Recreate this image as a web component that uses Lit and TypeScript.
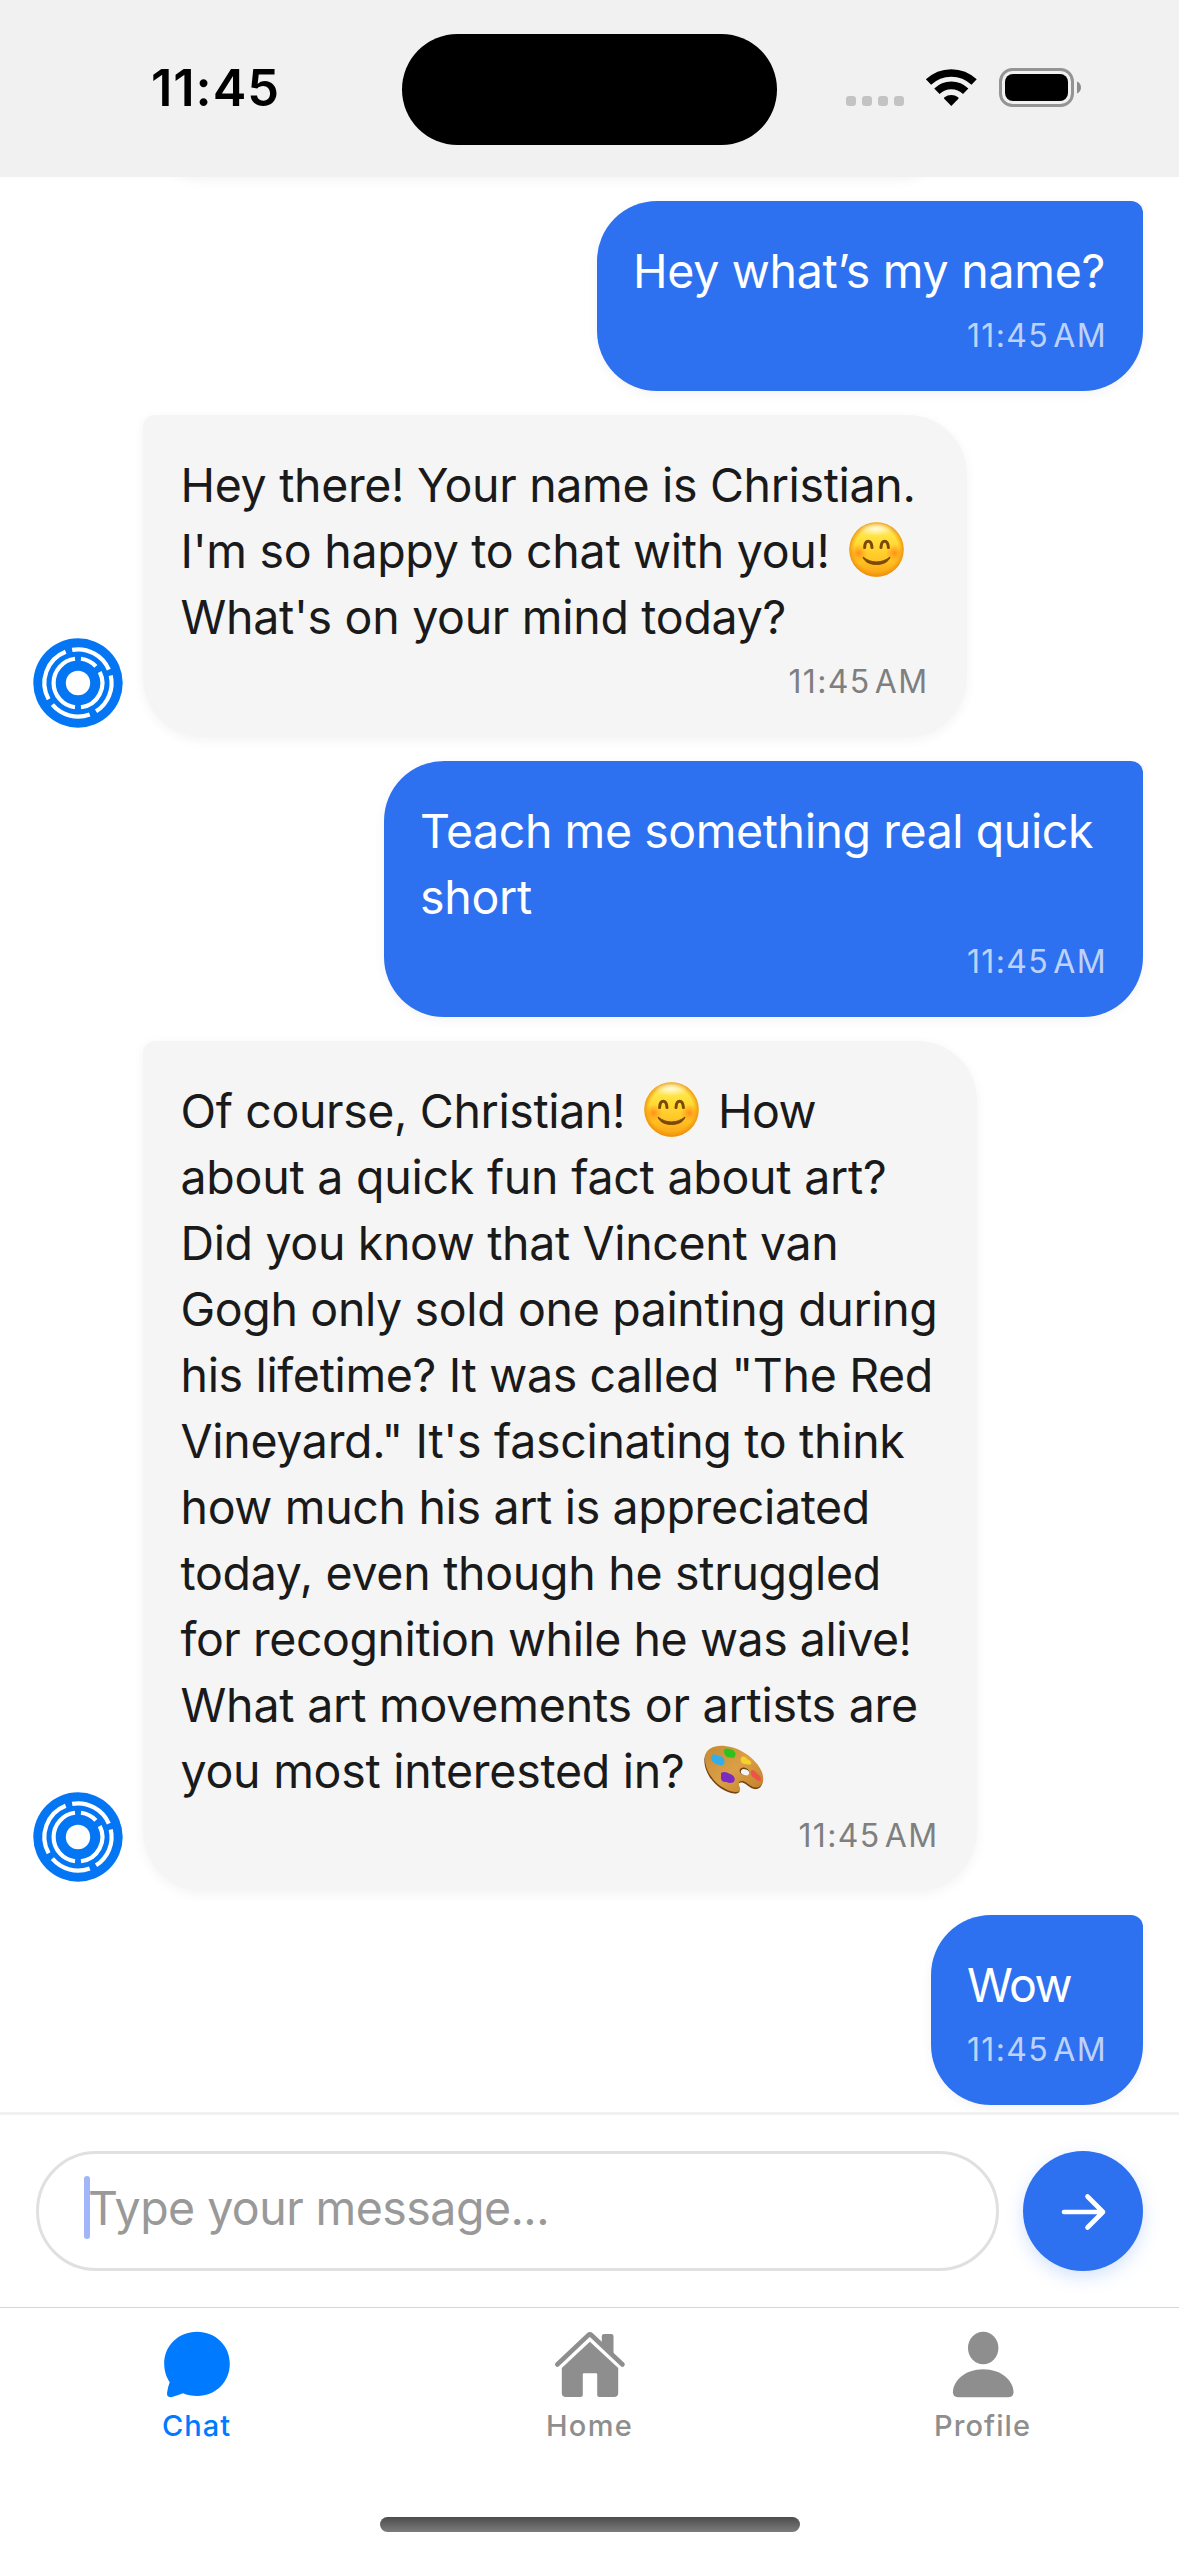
import { LitElement, html, svg, css, nothing, TemplateResult } from "lit";
import { customElement, property } from "lit/decorators.js";

type Part = { text: string; width: number } | { emoji: "smile" | "palette" };
interface Message {
  from: "me" | "bot";
  width: number;
  lines: Part[][];
  time: string;
}

const t = (text: string, width: number): Part => ({ text, width });

const MESSAGES: Message[] = [
  {
    from: "me",
    width: 546,
    time: "11:45\u200aAM",
    lines: [[t("Hey what’s my name?", 472)]],
  },
  {
    from: "bot",
    width: 824,
    time: "11:45\u200aAM",
    lines: [
      [t("Hey there! Your name is Christian.", 735)],
      [t("I'm so happy to chat with you!", 649), { emoji: "smile" }],
      [t("What's on your mind today?", 605.5)],
    ],
  },
  {
    from: "me",
    width: 759,
    time: "11:45\u200aAM",
    lines: [[t("Teach me something real quick", 673)], [t("short", 112)]],
  },
  {
    from: "bot",
    width: 834,
    time: "11:45\u200aAM",
    lines: [
      [t("Of course, Christian!", 444.5), { emoji: "smile" }, t("How", 98)],
      [t("about a quick fun fact about art?", 706)],
      [t("Did you know that Vincent van", 658)],
      [t("Gogh only sold one painting during", 757)],
      [t('his lifetime? It was called "The Red', 752.5)],
      [t('Vineyard." It\'s fascinating to think', 724)],
      [t("how much his art is appreciated", 689.5)],
      [t("today, even though he struggled", 700.5)],
      [t("for recognition while he was alive!", 731)],
      [t("What art movements or artists are", 737.5)],
      [t("you most interested in?", 504), { emoji: "palette" }],
    ],
  },
  { from: "me", width: 212, time: "11:45\u200aAM", lines: [[t("Wow", 104)]] },
];

/** One line of text whose tracking is adjusted so that it spans `width` pixels. */
@customElement("tracked-text")
class TrackedText extends LitElement {
  static styles = css`
    :host {
      display: inline-block;
      white-space: pre;
    }
  `;
  @property() text = "";
  @property({ type: Number }) width = 0;

  render() {
    return html`<span>${this.text}</span>`;
  }

  updated() {
    const span = this.renderRoot.querySelector("span")!;
    span.style.letterSpacing = "0";
    const natural = span.getBoundingClientRect().width;
    span.style.letterSpacing = `${(this.width - natural) / this.text.length}px`;
  }
}

@customElement("emoji-icon")
class EmojiIcon extends LitElement {
  static styles = css`
    :host {
      display: block;
      flex: none;
      margin-bottom: 2px;
    }
    svg {
      display: block;
    }
  `;
  @property() name = "smile";

  render() {
    return this.name === "smile" ? this.smile() : this.palette();
  }

  private smile() {
    return html`<svg width="55" height="55" viewBox="0 0 55 55" role="img" aria-label="😊">
      <defs>
        <linearGradient id="face" x1="0" y1="0" x2="0" y2="1">
          <stop offset="0" stop-color="#fff27c" />
          <stop offset=".3" stop-color="#ffe13c" />
          <stop offset=".65" stop-color="#ffc928" />
          <stop offset="1" stop-color="#fba012" />
        </linearGradient>
        <radialGradient id="rim">
          <stop offset=".8" stop-color="#f59a00" stop-opacity="0" />
          <stop offset="1" stop-color="#e98a10" stop-opacity=".85" />
        </radialGradient>
        <radialGradient id="blush">
          <stop offset="0" stop-color="#ff7a10" stop-opacity=".75" />
          <stop offset="1" stop-color="#ff8a10" stop-opacity="0" />
        </radialGradient>
        <radialGradient id="shine">
          <stop offset="0" stop-color="#fff" stop-opacity=".75" />
          <stop offset="1" stop-color="#fff" stop-opacity="0" />
        </radialGradient>
      </defs>
      <circle cx="27.5" cy="27.5" r="27.2" fill="url(#face)" />
      <circle cx="27.5" cy="27.5" r="27.2" fill="url(#rim)" />
      <ellipse cx="27" cy="7" rx="17" ry="7" fill="url(#shine)" />
      <circle cx="9.5" cy="31" r="9" fill="url(#blush)" />
      <circle cx="45.5" cy="31" r="9" fill="url(#blush)" />
      <g fill="none" stroke="#7d4707" stroke-linecap="round">
        <path d="M15.6 25.6c.4-8.4 6.8-8.4 7.4 0" stroke-width="3" />
        <path d="M32 25.6c.4-8.4 6.8-8.4 7.4 0" stroke-width="3" />
      </g>
      <path d="M14 35c8 6.6 19 6.6 27 0c-2.600 10-24.400 10-27 0z" fill="#7d4707" stroke="#7d4707" stroke-linejoin="round" />
    </svg>`;
  }

  private palette() {
    return html`<svg width="60" height="50" viewBox="0 0 60 50" role="img" aria-label="🎨">
      <defs>
        <linearGradient id="wood" x1="0" y1="0" x2="1" y2="1">
          <stop offset="0" stop-color="#c48a35" />
          <stop offset=".5" stop-color="#dba046" />
          <stop offset="1" stop-color="#c07f2a" />
        </linearGradient>
      </defs>
      <path id="board" transform="translate(-.6 1.600)" fill="#754410"
        d="M1 12C2 3 11 0 21 1c16 1.500 31 13 36.500 25c3 7 2.500 15-4.500 16.500c-6 .8-9-5-14-6.500c-4.500-.5-5 2.500-3.500 5.500c1.800 3.500 0 6-4.500 5.500C15 45 0 28 1 12z" />
      <path fill="url(#wood)"
        d="M1 12C2 3 11 0 21 1c16 1.500 31 13 36.500 25c3 7 2.500 15-4.500 16.500c-6 .8-9-5-14-6.500c-4.500-.5-5 2.500-3.500 5.500c1.800 3.500 0 6-4.500 5.500C15 45 0 28 1 12z" />
      <ellipse cx="40.500" cy="26.500" rx="5" ry="3.800" transform="rotate(20 40.500 26.500)" fill="#6f4012" />
      <ellipse cx="41" cy="27.200" rx="4.300" ry="3" transform="rotate(20 41 27.200)" fill="#f5f5f5" />
      <path fill="#35aee8" d="M8 10c3-2 5 0 7 1c4 0 6 3 5.500 6c0 3-3 4.500-5.500 3c-4-1-8-4-8-6.500z" />
      <path fill="#2fc21d" d="M20 5c1-2.500 4-1.500 6-1c3 .5 6 3 5.500 6c-.5 3-3 3.500-5.500 2.500c-4 0-6.500-3.500-6-7.500z" />
      <path fill="#f7d02b" d="M37 13c2-3 5-1 6 1c3 1 5 3 4 5c-2 1.500-5 0-7 0c-3-1-4-3.500-3-6z" />
      <path fill="#7b2bc0" d="M17 28c3-2 6-1 8 .5c4 1 6.500 4 5.500 7c-1 3-5 3-8 1.500c-4 .5-6-2-5.500-5z" />
      <path fill="#ee5348" d="M47 26c1-2 4-.5 5 1.500c3 2 5.500 5 5 8c-2 1.500-4 0-6-2c-3-1-5-4-4-7.500z" />
    </svg>`;
  }
}

const ARC = (radius: number, from: number, to: number) => {
  const point = (deg: number) => {
    const a = (deg * Math.PI) / 180;
    return `${45 + radius * Math.cos(a)} ${45 + radius * Math.sin(a)}`;
  };
  return `M${point(from)}A${radius} ${radius} 0 ${to - from > 180 ? 1 : 0} 1 ${point(to)}`;
};

@customElement("bot-avatar")
class BotAvatar extends LitElement {
  static styles = css`
    :host {
      display: block;
      flex: none;
      margin-bottom: 9px;
    }
    svg {
      display: block;
    }
  `;
  private arcs: [number, number, number][] = [
    [33.6, 151, 248.5],
    [33.6, 260, 336.5],
    [33.6, 347, 417.5],
    [33.6, 69.6, 139.7],
    [24.4, 97, 263],
    [24.4, 277, 317],
    [24.4, 333, 443],
  ];

  render() {
    return html`<svg width="90" height="90" viewBox="0 0 90 90">
      <circle cx="45" cy="45" r="44.700" fill="#0476f4" />
      <circle cx="45" cy="45" r="12.200" fill="#fff" />
      <g fill="none" stroke="#fff" stroke-width="4.200">
        ${this.arcs.map(([r, a, b]) => svg`<path d=${ARC(r, a, b)} />`)}
      </g>
    </svg>`;
  }
}

@customElement("chat-message")
class ChatMessage extends LitElement {
  static styles = css`
    :host {
      display: flex;
      align-items: flex-end;
      gap: 20px;
      padding: 0 36px 0 33px;
    }
    :host([from="me"]) {
      justify-content: flex-end;
    }
    .bubble {
      box-sizing: border-box;
      flex: none;
      display: flex;
      flex-direction: column;
      padding: 36.5px 38.5px 35.5px 37.5px;
      border-radius: 12px 60px 60px 60px;
      background: #f5f5f5;
      color: #1a1a1a;
      box-shadow: 0 3px 12px rgba(0, 0, 0, 0.05);
    }
    .me {
      padding: 36.5px 36px 35.5px;
      border-radius: 60px 12px 60px 60px;
      background: #2d71f0;
      color: #fff;
    }
    .line {
      display: flex;
      align-items: center;
      gap: 19px;
      height: 66px;
      font-size: 46.5px;
      line-height: 66px;
    }
    .time {
      align-self: flex-end;
      width: 140px;
      height: 40px;
      margin-top: 12px;
      font-size: 32px;
      line-height: 40px;
      color: #7f7f7f;
    }
    .me .time {
      color: rgba(255, 255, 255, 0.7);
    }
  `;
  @property({ attribute: false }) message!: Message;

  private part(p: Part): TemplateResult {
    return "emoji" in p
      ? html`<emoji-icon .name=${p.emoji}></emoji-icon>`
      : html`<tracked-text .text=${p.text} .width=${p.width}></tracked-text>`;
  }

  render() {
    const m = this.message;
    return html`
      ${m.from === "bot" ? html`<bot-avatar></bot-avatar>` : nothing}
      <div class="bubble ${m.from}" style="width:${m.width}px">
        ${m.lines.map((l) => html`<div class="line">${l.map((p) => this.part(p))}</div>`)}
        <div class="time"><tracked-text .text=${m.time} .width=${140}></tracked-text></div>
      </div>
    `;
  }
}

@customElement("status-bar")
class StatusBar extends LitElement {
  static styles = css`
    :host {
      display: grid;
      grid-template-columns: 402px 375px 402px;
      height: 177px;
      background: #f1f1f1;
    }
    .clock {
      padding: 57px 0 0 151px;
      font-size: 50.5px;
      font-weight: 600;
      line-height: 62px;
      color: #000;
    }
    .island {
      height: 111px;
      margin-top: 33.5px;
      border-radius: 56px;
      background: #000;
    }
    svg {
      display: block;
      margin: 60px 0 0 69px;
    }
  `;

  render() {
    return html`
      <div class="clock"><tracked-text .text=${"11:45"} .width=${129}></tracked-text></div>
      <div class="island"></div>
      <svg width="240" height="56" viewBox="0 0 240 56">
        <g fill="#c3c3c3">
          ${[0, 16, 32, 48].map((x) => svg`<rect x=${x} y="36" width="10" height="10" rx="3.200" />`)}
        </g>
        <path d="M105.300 46l-7.100-7.300q-.6-.9.300-1.500a11.300 11.300 0 0 1 13.600 0q.9.600.3 1.500z" />
        <path d="M90.900 31.300A20.500 20.500 0 0 1 119.700 31.300" fill="none" stroke="#000" stroke-width="7.600" />
        <path d="M82.500 22.100A33 33 0 0 1 128.100 22.100" fill="none" stroke="#000" stroke-width="7.600" />
        <rect x="154.500" y="9.500" width="72" height="36" rx="12" fill="none" stroke="#949494" stroke-width="3" />
        <rect x="159" y="14" width="63" height="27" rx="8" />
        <path d="M231 21.500q4 1.800 4 6t-4 6z" fill="#8c8c8c" />
      </svg>
    `;
  }
}

@customElement("message-composer")
class MessageComposer extends LitElement {
  static styles = css`
    :host {
      display: flex;
      align-items: center;
      gap: 24px;
      box-sizing: border-box;
      height: 195px;
      padding: 0 36px;
      border-top: 3px solid #f1f1f1;
      background: #fff;
    }
    .field {
      box-sizing: border-box;
      flex: 1;
      display: flex;
      align-items: center;
      height: 120px;
      padding: 0 45px 6px;
      border: 3px solid #e0e0e0;
      border-radius: 60px;
      font-size: 46.5px;
      line-height: 66px;
      color: #999;
    }
    .caret {
      width: 6px;
      height: 63px;
      margin: 0 -2px 2px 0;
      border-radius: 3px;
      background: #a1b5fb;
    }
    .send {
      display: flex;
      align-items: center;
      justify-content: center;
      width: 120px;
      height: 120px;
      border-radius: 50%;
      background: #2d71f0;
      box-shadow: 0 6px 18px rgba(45, 113, 240, 0.2);
    }
  `;

  render() {
    return html`
      <div class="field">
        <span class="caret"></span>
        <tracked-text .text=${"Type your message..."} .width=${461}></tracked-text>
      </div>
      <div class="send">
        <svg width="60" height="60" viewBox="0 0 60 60" fill="none" stroke="#fff" stroke-width="4.600"
          stroke-linecap="round" stroke-linejoin="round">
          <path d="M11 31H50M34.500 15.500L50 31L34.500 46.500" />
        </svg>
      </div>
    `;
  }
}

@customElement("tab-bar")
class TabBar extends LitElement {
  static styles = css`
    :host {
      display: flex;
      flex-direction: column;
      justify-content: space-between;
      align-items: center;
      box-sizing: border-box;
      height: 249px;
      padding-bottom: 24px;
      border-top: 1px solid #d6d6d6;
      background: #fff;
    }
    .tabs {
      display: grid;
      grid-template-columns: repeat(3, 1fr);
      width: 100%;
    }
    .tab {
      display: flex;
      flex-direction: column;
      align-items: center;
      gap: 3px;
      padding-top: 17px;
      font-size: 29px;
      font-weight: 500;
      line-height: 36px;
      color: #8e8e8e;
      fill: #8e8e8e;
    }
    .active {
      color: #007aff;
      fill: #007aff;
    }
    .indicator {
      width: 420px;
      height: 15px;
      border-radius: 8px;
      background: linear-gradient(#4c4c4c, #7c7c7c);
    }
  `;

  render() {
    return html`
      <div class="tabs">
        <div class="tab active">
          <svg width="80" height="80" viewBox="0 0 80 80">
            <path d="M40 6.700C58.500 6.700 72.800 20.500 72.800 38.800S58.500 71 40.500 71C35 71 30 70 26 68.200Q20.500 70.300 15 72Q9.500 73 10.100 67.500Q10.800 62 12.700 57.200C9.500 52.500 7.200 46 7.200 38.800C7.200 20.500 21.500 6.700 40 6.700z" />
          </svg>
          <tracked-text .text=${"Chat"} .width=${69}></tracked-text>
        </div>
        <div class="tab">
          <svg width="80" height="80" viewBox="0 0 80 80">
            <path d="M7.300 39.500L38.300 10.200Q39.900 8.700 41.500 10.200L72.500 39.500" fill="none" stroke="#8e8e8e"
              stroke-width="4.600" stroke-linecap="round" stroke-linejoin="round" />
            <path d="M51.800 18V11.200Q51.800 9 54 9H61.300Q63.500 9 63.500 11.200V31z" />
            <path d="M39.900 16.700L68.200 43V68Q68.200 72.100 64 72.100H49.400Q47.200 72.100 47.200 70V49.300Q47.200 48.300 46.200 48.300H33.800Q32.800 48.300 32.800 49.300V70Q32.800 72.100 30.600 72.100H16Q11.800 72.100 11.800 68V43z" />
          </svg>
          <tracked-text .text=${"Home"} .width=${87}></tracked-text>
        </div>
        <div class="tab">
          <svg width="80" height="80" viewBox="0 0 80 80">
            <ellipse cx="40.200" cy="23" rx="15.200" ry="16.300" />
            <path d="M40.200 44.300C58.500 44.300 70.500 56 70.500 67.300Q70.500 72.200 65.500 72.200H15Q9.900 72.200 9.900 67.300C9.900 56 22 44.300 40.200 44.300z" />
          </svg>
          <tracked-text .text=${"Profile"} .width=${97}></tracked-text>
        </div>
      </div>
      <div class="indicator"></div>
    `;
  }
}

@customElement("app-root")
class AppRoot extends LitElement {
  static styles = css`
    :host {
      display: flex;
      flex-direction: column;
      width: 1179px;
      height: 2556px;
      overflow: hidden;
      background: #fff;
      font-family: Inter, "Liberation Sans", sans-serif;
    }
    .thread {
      flex: 1;
      min-height: 0;
      display: flex;
      flex-direction: column;
      justify-content: flex-end;
      gap: 24px;
      padding-bottom: 7px;
      overflow: hidden;
    }
    /* Lower edge of the message that has scrolled out of view. */
    .scrolled {
      flex: none;
      width: 814px;
      height: 150px;
      margin-left: 143px;
      border-radius: 12px 60px 60px 60px;
      background: #f5f5f5;
      box-shadow: 0 3px 12px rgba(0, 0, 0, 0.05);
    }
    chat-message {
      flex: none;
    }
  `;

  render() {
    return html`
      <status-bar></status-bar>
      <div class="thread">
        <div class="scrolled"></div>
        ${MESSAGES.map((m) => html`<chat-message from=${m.from} .message=${m}></chat-message>`)}
      </div>
      <message-composer></message-composer>
      <tab-bar></tab-bar>
    `;
  }
}
